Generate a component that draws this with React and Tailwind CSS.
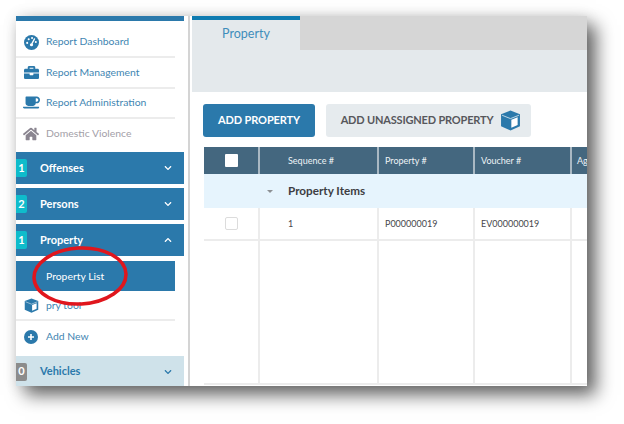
import React from 'react';
import { FaBriefcase, FaCoffee, FaHome, FaChevronDown, FaChevronUp } from 'react-icons/fa';

function GaugeIcon() {
  return (
    <svg width="15" height="15" viewBox="0 0 16 16">
      <circle cx="8" cy="8" r="8" fill="#2b79ab" />
      <circle cx="3.4" cy="8.4" r="1.1" fill="#fff" />
      <circle cx="5" cy="4.6" r="1.1" fill="#fff" />
      <circle cx="8.6" cy="3.2" r="1.1" fill="#fff" />
      <circle cx="12.6" cy="7.4" r="1.1" fill="#fff" />
      <path d="M11.2 4.2 L8.6 9" stroke="#fff" strokeWidth="1.4" strokeLinecap="round" />
      <circle cx="8" cy="10.4" r="1.7" fill="#fff" />
    </svg>
  );
}

function CubeIcon({ size }) {
  return (
    <svg width={size} height={size} viewBox="0 0 20 20">
      <path d="M10 0.5 L19 4 V15.5 L10 19.5 L1 15.5 V4 Z" fill="#2b79ab" />
      <path d="M2 5 L10 8.2 L18 5" fill="none" stroke="#d9e6ee" strokeWidth="0.8" />
      <path d="M10.8 9.4 L16.8 7 V14.4 L10.8 17 Z" fill="#fff" />
    </svg>
  );
}

function PlusIcon() {
  return (
    <svg width="14" height="14" viewBox="0 0 14 14">
      <circle cx="7" cy="7" r="7" fill="#2b79ab" />
      <path d="M7 4 V10 M4 7 H10" stroke="#fff" strokeWidth="1.6" />
    </svg>
  );
}

const topLinks = [
  { label: 'Report Dashboard', icon: <GaugeIcon /> },
  { label: 'Report Management', icon: <FaBriefcase className="text-[15px]" /> },
  { label: 'Report Administration', icon: <FaCoffee className="text-[17px]" /> },
  { label: 'Domestic Violence', icon: <FaHome className="text-[16px]" />, muted: true },
];

function SectionHeader({ count, label, open }) {
  const Chevron = open ? FaChevronUp : FaChevronDown;
  return (
    <div className="flex h-[32px] items-center justify-between bg-[#2b79ab] pr-[12px] text-white">
      <div className="flex items-center">
        <div className="flex h-[18px] w-[11px] items-center justify-center rounded-r-[2px] bg-[#0fbccb] text-[11px] font-bold">{count}</div>
        <div className="ml-[13px] text-[11px] font-bold">{label}</div>
      </div>
      <Chevron className="text-[8px]" />
    </div>
  );
}

function Cell({ w, children, className }) {
  return <div className={`flex h-full shrink-0 items-center border-r-2 ${w} ${className || ''}`}>{children}</div>;
}

function App() {
  return (
    <div className="h-[424px] w-[624px] overflow-hidden bg-white pl-4 pt-4 font-['Lato','Open_Sans',sans-serif]">
      <div className="relative flex h-[370px] w-[571px] bg-white shadow-[9px_9px_17px_rgba(0,0,0,0.6),0_0_14px_rgba(0,0,0,0.1)]">
        {/* sidebar */}
        <div className="w-[168px] shrink-0">
          <div className="h-[5px] bg-[#2b79ab]" />
          <div className="mt-[7px] w-[159px]">
            {topLinks.map((item) => (
              <div
                key={item.label}
                className={`flex h-[30.25px] items-center border-b-2 border-[#ececec] text-[10.4px] last:border-b-0 ${item.muted ? 'text-[#a3a0a8]' : 'text-[#3f86b2]'}`}
              >
                <div className={`flex w-[30px] justify-center ${item.muted ? 'text-[#8a8590]' : 'text-[#2b79ab]'}`}>
                  {item.icon}
                </div>
                {item.label}
              </div>
            ))}
          </div>
          <div className="mt-[3px] flex flex-col gap-[4px]">
            <SectionHeader count="1" label="Offenses" />
            <SectionHeader count="2" label="Persons" />
            <SectionHeader count="1" label="Property" open />
          </div>
          <div className="mt-[5px] w-[159px]">
            <div className="flex h-[30px] items-center bg-[#2b79ab] pl-[30px] pt-[1px] text-[10.4px] text-white">Property List</div>
            <div className="flex h-[30px] items-center border-b-2 border-[#ececec] pt-[1px] text-[10.4px] text-[#3f86b2]">
              <div className="flex w-[30px] justify-center"><CubeIcon size={15} /></div>
              pry tool
            </div>
            <div className="flex h-[30px] items-center pt-[1px] text-[10.4px] text-[#3f86b2]">
              <div className="flex w-[30px] justify-center"><PlusIcon /></div>
              Add New
            </div>
          </div>
          <div className="mt-[5px] flex h-[30px] items-center justify-between bg-[#cfe2ea] pr-[12px] pt-[1px] text-[#2b79ab]">
            <div className="flex items-center">
              <div className="flex h-[18px] w-[11px] items-center justify-center rounded-r-[2px] bg-[#8c8c8c] text-[11px] font-bold text-white">0</div>
              <div className="ml-[13px] text-[11px] font-bold">Vehicles</div>
            </div>
            <FaChevronDown className="text-[8px]" />
          </div>
        </div>

        {/* divider */}
        <div className="ml-[4px] mr-[2px] w-[2px] shrink-0 bg-[#d4d4d4]" />

        {/* main */}
        <div className="min-w-0 flex-1 overflow-hidden">
          <div className="flex h-[34px] bg-[#d6d6d6]">
            <div className="flex w-[108px] justify-center border-t-4 border-[#0f7bb0] bg-[#e4e9ec] pt-[5px] text-[12.5px] text-[#3f8dbb]">Property</div>
          </div>
          <div className="h-[42px] bg-[#e4e9ec]" />
          <div className="ml-[11px] mt-[12px] flex gap-[11px]">
            <div className="flex h-[33px] w-[112px] items-center justify-center rounded-[3px] bg-[#2b79ab] text-[11px] font-bold tracking-[-0.1px] text-white">ADD PROPERTY</div>
            <div className="flex h-[33px] w-[205px] items-center justify-center gap-[7px] rounded-[3px] bg-[#e6ebee] pl-[5px] text-[11px] font-bold tracking-[-0.18px] text-[#57575c]">
              ADD UNASSIGNED PROPERTY
              <CubeIcon size={21} />
            </div>
          </div>

          <div className="ml-[12px] mt-[10px] w-[420px] border-b-2 border-[#ececec]">
            <div className="flex h-[27px] bg-[#44677f] text-[9px] text-[#eef3f6]">
              <Cell w="w-[56px]" className="justify-center border-[#a9b8c3]">
                <div className="h-[13px] w-[13px] rounded-[1px] bg-white" />
              </Cell>
              <Cell w="w-[119px]" className="border-[#a9b8c3] pl-[28px]">Sequence #</Cell>
              <Cell w="w-[96px]" className="border-[#a9b8c3] pl-[6px]">Property #</Cell>
              <Cell w="w-[97px]" className="border-[#a9b8c3] pl-[6px]">Voucher #</Cell>
              <div className="flex items-center pl-[5px]">Agency</div>
            </div>
            <div className="flex h-[34px] items-center bg-[#e6f4fd] text-[#3d3d42]">
              <div className="ml-[63px] h-0 w-0 border-x-[3px] border-t-[3px] border-x-transparent border-t-[#8c9094]" />
              <div className="ml-[15px] text-[11.7px] font-bold">Property Items</div>
            </div>
            <div className="flex h-[33px] border-b-2 border-[#ececec] text-[9px] text-[#47474c]">
              <Cell w="w-[56px]" className="justify-center border-[#ececec]">
                <div className="h-[13px] w-[13px] rounded-[2px] border border-[#dcdcdc] bg-white" />
              </Cell>
              <Cell w="w-[119px]" className="border-[#ececec] pl-[28px]">1</Cell>
              <Cell w="w-[96px]" className="border-[#ececec] pl-[6px]">P000000019</Cell>
              <Cell w="w-[97px]" className="border-[#ececec] pl-[6px]">EV000000019</Cell>
            </div>
            <div className="flex h-[142px]">
              <Cell w="w-[56px]" className="border-[#ececec]" />
              <Cell w="w-[119px]" className="border-[#ececec]" />
              <Cell w="w-[96px]" className="border-[#ececec]" />
              <Cell w="w-[97px]" className="border-[#ececec]" />
            </div>
          </div>
        </div>

        {/* red annotation circle */}
        <svg className="absolute left-[15px] top-[229px]" width="98" height="62" viewBox="0 0 98 62" fill="none">
          <ellipse cx="49" cy="31" rx="46" ry="28" transform="rotate(-3 49 31)" stroke="#e0161d" strokeWidth="3.5" />
        </svg>
      </div>
    </div>
  );
}

export default App;
